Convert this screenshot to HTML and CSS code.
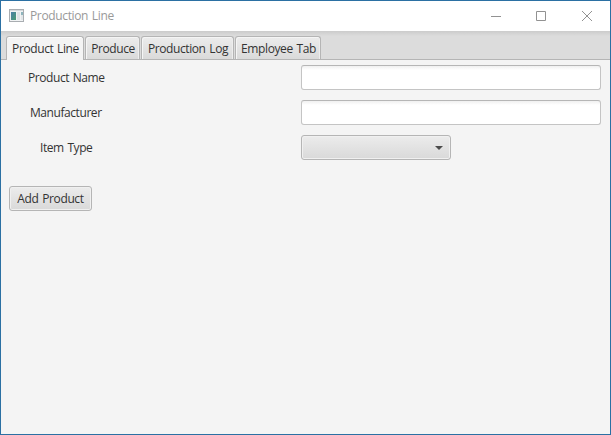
FILE: index.html
```
<!DOCTYPE html>
<html lang="en">
<head>
<meta charset="utf-8">
<title>Production Line</title>
<link rel="stylesheet" href="styles.css">
</head>
<body>
<div class="window">
  <header class="titlebar">
    <svg class="app-icon" width="16" height="14" viewBox="0 0 16 14">
      <defs><linearGradient id="g" x1="0" y1="0" x2="1" y2="1"><stop offset="0" stop-color="#4b7fa8"/><stop offset="1" stop-color="#4b9c72"/></linearGradient></defs>
      <rect x=".5" y=".5" width="14" height="12" fill="#f1f3f4" stroke="#a9adb1"/>
      <path d="M1 1.5h13" stroke="#d5d9dc"/>
      <rect x="2" y="3" width="5" height="8" fill="url(#g)"/>
      <rect x="8" y="3" width="3" height="8" fill="#dfe3e6"/>
      <rect x="12" y="3" width="2" height="3" fill="#8eb5bd"/>
      <rect x="12" y="6" width="2" height="5" fill="#e2e6e8"/>
    </svg>
    <span class="title">Production Line</span>
    <svg class="controls" width="103" height="12" viewBox="0 0 103 12" fill="none" stroke="#929292">
      <path d="M0 6.5h10M45.500 1.500h9v9h-9zM91 1l10 10M101 1L91 11"/>
    </svg>
  </header>
  <nav class="tabs">
    <button class="tab tab-line active"><span>Product Line</span></button>
    <button class="tab tab-produce"><span>Produce</span></button>
    <button class="tab tab-log"><span>Production Log</span></button>
    <button class="tab tab-employee"><span>Employee Tab</span></button>
  </nav>
  <main class="form">
    <label class="name" for="name">Product Name</label><input id="name">
    <label class="maker" for="maker">Manufacturer</label><input id="maker">
    <label class="type" for="type">Item Type</label>
    <button class="combo" id="type" aria-label="Item Type"><svg width="8" height="4" viewBox="0 0 8 4"><path d="M0 0h8L4 4z" fill="#4c4c4c"/></svg></button>
    <button class="add"><span>Add Product</span></button>
  </main>
</div>
</body>
</html>
```
FILE: styles.css
```
* { box-sizing: border-box; }
body {
  margin: 0;
  font: 12px/16px "Open Sans", "Noto Sans", sans-serif;
  color: #333;
}
button, input { font: inherit; color: inherit; margin: 0; padding: 0; outline: 0; }
span, label { white-space: nowrap; }
.window {
  width: 611px;
  height: 435px;
  border: 1px solid #2b70a3;
  background: #f4f4f4;
}
.titlebar {
  display: flex;
  align-items: center;
  height: 30px;
  padding: 0 16px 0 8px;
  background: #fff;
  color: #999;
}
.title { margin-left: 5px; letter-spacing: -.36px; word-spacing: 1px; }
.controls { margin-left: auto; }
.tabs {
  display: flex;
  align-items: flex-end;
  gap: 1px;
  height: 29px;
  padding-left: 5px;
  background: linear-gradient(#cbcbcb, #dcdcdc 5px);
  border-bottom: 1px solid #b5b5b5;
}
.tab {
  display: flex;
  justify-content: center;
  align-items: center;
  height: 23px;
  padding-top: 1px;
  padding-left: 1px;
  border: 1px solid #b5b5b5;
  border-bottom: 0;
  border-radius: 3px 3px 0 0;
  background: linear-gradient(#ececec, #dadada);
  box-shadow: inset 1px 1px #f5f5f5, inset -1px 0 #ededed;
  letter-spacing: -.4px;
  word-spacing: 1px;
}
.tab.active { height: 24px; margin-bottom: -1px; padding-top: 0; background: #f4f4f4; box-shadow: inset 0 1px #fff; }
.tab-line { width: 78px; }
.tab-produce { width: 55px; }
.tab-log { width: 93px; }
.tab-employee { width: 86px; }
.form {
  display: grid;
  grid-template-columns: 292px 300px;
  grid-auto-rows: 25px;
  row-gap: 10px;
  padding: 5px 8px;
  align-items: center;
  letter-spacing: -.43px;
  word-spacing: 1px;
}
label { padding-top: 1px; }
.name { padding-left: 19px; }
.maker { padding-left: 21px; }
.type { padding-left: 31px; }
input {
  width: 300px;
  height: 25px;
  border: 1px solid #c4c4c4;
  border-top-color: #b6b6b6;
  border-radius: 3px;
  background: linear-gradient(#f0f0f0, #fff 4px);
}
.combo, .add {
  display: flex;
  align-items: center;
  height: 25px;
  border: 1px solid #b5b5b5;
  border-radius: 3px;
  background: linear-gradient(#ececec, #d9d9d9);
  box-shadow: inset 0 0 0 1px #f0f0f0;
}
.combo { width: 150px; justify-content: flex-end; padding-right: 7px; }
.add { width: 83px; justify-content: center; margin-top: 32px; padding-top: 1px; letter-spacing: -.38px; word-spacing: 1px; }
```
